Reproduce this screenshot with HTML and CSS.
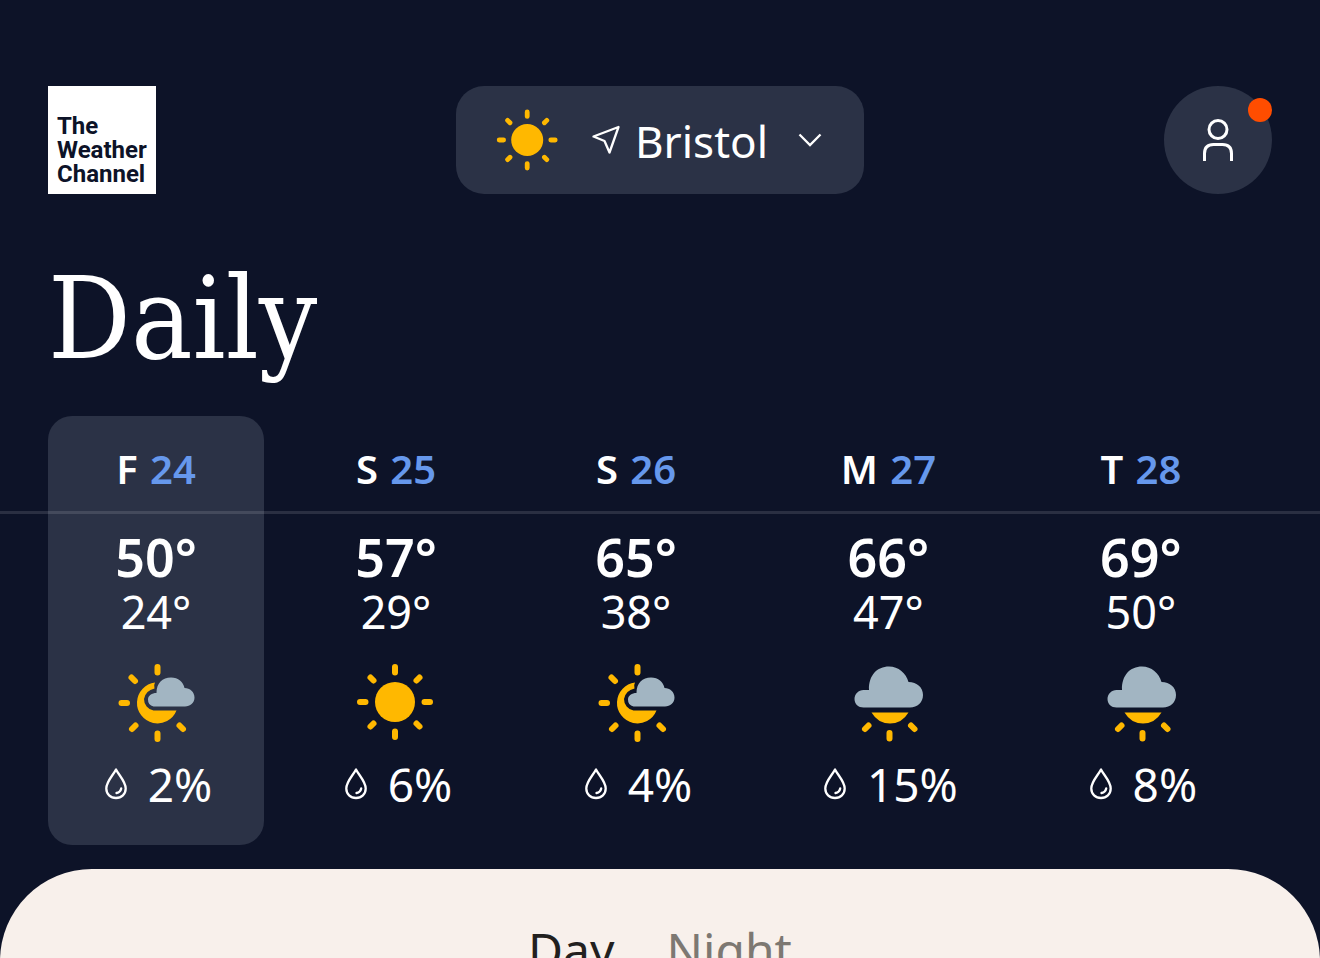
FILE: index.html
```html
<!DOCTYPE html>
<html lang="en">
<head>
<meta charset="utf-8">
<meta name="viewport" content="width=device-width, initial-scale=1">
<title>Daily forecast</title>
<link rel="stylesheet" href="styles.css">
</head>
<body>
<svg class="defs" aria-hidden="true">
  <symbol id="sun" viewBox="0 0 80 80">
    <circle cx="39" cy="40" r="20" fill="#ffb800"/>
    <path d="M39 5v5.500M39 69.500v5.500M4 40h5.500M68.500 40h5.500M14.500 15.500l3 3M60.500 61.500l3 3M63.500 15.500l-3 3M17.500 61.500l-3 3" stroke="#ffb800" stroke-width="6" stroke-linecap="round"/>
  </symbol>
  <symbol id="partly" viewBox="-2 0 80 80">
    <path d="M39.500 5v5.500M39.500 71.500v5.500M3.500 41h5.500M13.500 15.500l3.500 3.500M17.500 63.500l-3.500 3.500M61.500 63.500l3.500 3.500" stroke="#ffb800" stroke-width="6" stroke-linecap="round"/>
    <path d="M37 20.500A20.500 20.500 0 1 0 58.500 48.500H35.500A11.500 11.500 0 0 1 26 37Q27.500 28.500 36.500 26.500Q35.500 23 37 20.500Z" fill="#ffb800"/>
    <path d="M35.500 44.500a7 7 0 0 1-5.500-7c0-4 4-6.500 8.500-6.500C38.500 21 44.500 15.500 53 15.500C60.500 15.500 65 20 66.500 26C72 26 76.500 30 76.500 35.500S72 44.500 67 44.500Z" fill="#a2b5c2"/>
  </symbol>
  <symbol id="cloudy" viewBox="-1 0 80 80">
    <path d="M14.500 45.500C9.500 45.500 5.500 42 5.500 37S9.500 28 14.500 28H20C19.500 13.500 28 4.500 40 4.500C49.500 4.500 57 11 59.500 20C68 20 74 25.500 74 33S68.500 45.500 61 45.500Z" fill="#a2b5c2"/>
    <path d="M22.500 50.500H59.500Q53 61.500 41 61.500T22.500 50.500Z" fill="#ffb800"/>
    <path d="M40.500 71v5.500M19.500 63.500l-3.500 3.500M62 63.500l3.500 3.500" stroke="#ffb800" stroke-width="6" stroke-linecap="round"/>
  </symbol>
  <symbol id="drop" viewBox="0 0 24 32">
    <path d="M12 1.500C9 7.500 2.300 13.500 2.300 20.500C2.300 26 6.500 30 12 30S21.700 26 21.700 20.500C21.700 13.500 15 7.500 12 1.500Z" fill="none" stroke="#fff" stroke-width="2.300" stroke-linejoin="round"/>
    <path d="M12.500 25C15 24.500 16.700 23 17.200 20.500" fill="none" stroke="#fff" stroke-width="2.300" stroke-linecap="round"/>
  </symbol>
</svg>

<header class="topbar">
  <a class="brand" href="#" aria-label="The Weather Channel">The<br>Weather<br>Channel</a>
  <button class="location" type="button">
    <svg class="location-sun" aria-hidden="true"><use href="#sun"/></svg>
    <svg class="location-arrow" viewBox="0 0 28 30" aria-hidden="true"><path d="M26.500 2L1.500 11.500L12.500 16L17.500 27.500Z" fill="none" stroke="#fff" stroke-width="2.300" stroke-linejoin="round"/></svg>
    <span class="location-name">Bristol</span>
    <svg class="location-chevron" viewBox="0 0 24 14" aria-hidden="true"><path d="M1.500 1.500L12 12L22.500 1.500" fill="none" stroke="#fff" stroke-width="2.300"/></svg>
  </button>
  <button class="account" type="button" aria-label="Account">
    <svg class="account-icon" viewBox="0 0 32 44" aria-hidden="true"><g fill="none" stroke="#fff" stroke-width="3"><circle cx="16" cy="11.500" r="9"/><path d="M2.500 43V35.500Q2.500 26.500 11.500 26.500H20.500Q29.500 26.500 29.500 35.500V43"/></g></svg>
    <span class="badge"></span>
  </button>
</header>

<main>
  <h1 class="title">Daily</h1>

  <div class="days">
    <button class="day day-selected" type="button" aria-pressed="true">
      <span class="date">F <span class="date-number">24</span></span>
      <span class="high">50°</span>
      <span class="low">24°</span>
      <svg class="sky" aria-hidden="true"><use href="#partly"/></svg>
      <span class="rain"><svg class="drop" aria-hidden="true"><use href="#drop"/></svg>2%</span>
    </button>
    <button class="day" type="button" aria-pressed="false">
      <span class="date">S <span class="date-number">25</span></span>
      <span class="high">57°</span>
      <span class="low">29°</span>
      <svg class="sky" aria-hidden="true"><use href="#sun"/></svg>
      <span class="rain"><svg class="drop" aria-hidden="true"><use href="#drop"/></svg>6%</span>
    </button>
    <button class="day" type="button" aria-pressed="false">
      <span class="date">S <span class="date-number">26</span></span>
      <span class="high">65°</span>
      <span class="low">38°</span>
      <svg class="sky" aria-hidden="true"><use href="#partly"/></svg>
      <span class="rain"><svg class="drop" aria-hidden="true"><use href="#drop"/></svg>4%</span>
    </button>
    <button class="day" type="button" aria-pressed="false">
      <span class="date">M <span class="date-number">27</span></span>
      <span class="high">66°</span>
      <span class="low">47°</span>
      <svg class="sky" aria-hidden="true"><use href="#cloudy"/></svg>
      <span class="rain"><svg class="drop" aria-hidden="true"><use href="#drop"/></svg>15%</span>
    </button>
    <button class="day" type="button" aria-pressed="false">
      <span class="date">T <span class="date-number">28</span></span>
      <span class="high">69°</span>
      <span class="low">50°</span>
      <svg class="sky" aria-hidden="true"><use href="#cloudy"/></svg>
      <span class="rain"><svg class="drop" aria-hidden="true"><use href="#drop"/></svg>8%</span>
    </button>
  </div>

  <section class="sheet">
    <button class="tab tab-selected" type="button">Day</button>
    <button class="tab" type="button">Night</button>
  </section>
</main>
</body>
</html>
```
FILE: styles.css
```css
* {
  box-sizing: border-box;
}

html {
  height: 100%;
}

body {
  margin: 0;
  height: 100%;
  overflow: hidden;
  display: flex;
  flex-direction: column;
  background: #0d1328;
  color: #fff;
  font-family: "Noto Sans", sans-serif;
}

button {
  margin: 0;
  padding: 0;
  border: 0;
  background: none;
  color: inherit;
  font: inherit;
  cursor: pointer;
}

svg {
  display: block;
  flex: none;
}

.defs {
  position: absolute;
  width: 0;
  height: 0;
}

.topbar {
  display: flex;
  justify-content: space-between;
  padding: 86px 48px 0;
}

.brand {
  display: flex;
  flex-direction: column;
  justify-content: flex-end;
  width: 108px;
  height: 108px;
  padding: 0 0 8px 9px;
  background: #fff;
  color: #0d1328;
  font: 700 24px/24px Roboto, sans-serif;
  text-decoration: none;
}

.location {
  display: flex;
  align-items: center;
  height: 108px;
  padding: 0 42px 0 40px;
  border-radius: 28px;
  background: #2b3246;
}

.location-sun {
  width: 64px;
  height: 64px;
}

.location-arrow {
  width: 28px;
  height: 30px;
  margin-left: 32px;
}

.location-name {
  margin-left: 15px;
  padding-top: 2px;
  font-size: 44px;
  line-height: 60px;
}

.location-chevron {
  width: 24px;
  height: 14px;
  margin-left: 30px;
}

.account {
  position: relative;
  display: flex;
  align-items: center;
  justify-content: center;
  width: 108px;
  height: 108px;
  border-radius: 50%;
  background: #2b3246;
}

.account-icon {
  width: 32px;
  height: 44px;
}

.badge {
  position: absolute;
  top: 12px;
  right: 0;
  width: 24px;
  height: 24px;
  border-radius: 50%;
  background: #ff4d00;
}

.title {
  margin: 0;
  padding: 48px 48px 22px;
  font: 400 115px/152px "DejaVu Serif Condensed", "DejaVu Serif", serif;
}

.days {
  position: relative;
  display: flex;
  gap: 24px;
  padding: 0 48px;
}

.days::after {
  content: "";
  position: absolute;
  top: 95px;
  left: 0;
  right: 0;
  height: 3px;
  background: rgba(255, 255, 255, 0.12);
  pointer-events: none;
}

.day {
  display: flex;
  flex: none;
  flex-direction: column;
  align-items: center;
  min-width: 216px;
  padding: 24px 51px 31px;
  border-radius: 24px;
}

.day-selected {
  background: #2b3246;
}

.date {
  margin-bottom: 30px;
  font-size: 40px;
  font-weight: 600;
  line-height: 58px;
}

.date-number {
  margin-left: 2px;
  color: #6698ec;
}

.high {
  font-size: 52px;
  font-weight: 600;
  line-height: 58px;
}

.low {
  font-size: 45px;
  line-height: 52px;
}

.sky {
  width: 80px;
  height: 80px;
  margin: 24px 0 12px;
}

.rain {
  display: flex;
  align-items: center;
  gap: 20px;
  padding-left: 4px;
  font-size: 46px;
  line-height: 60px;
}

.drop {
  width: 24px;
  height: 32px;
}

.sheet {
  display: flex;
  flex: 1 0 auto;
  align-items: flex-start;
  justify-content: center;
  gap: 52px;
  margin-top: 24px;
  padding-top: 49px;
  border-radius: 92px 92px 0 0;
  background: #f8f0eb;
}

main {
  display: flex;
  flex: 1;
  flex-direction: column;
}

.tab {
  color: #7d7872;
  font-size: 48px;
  line-height: 64px;
}

.tab-selected {
  color: #22201e;
}
```
